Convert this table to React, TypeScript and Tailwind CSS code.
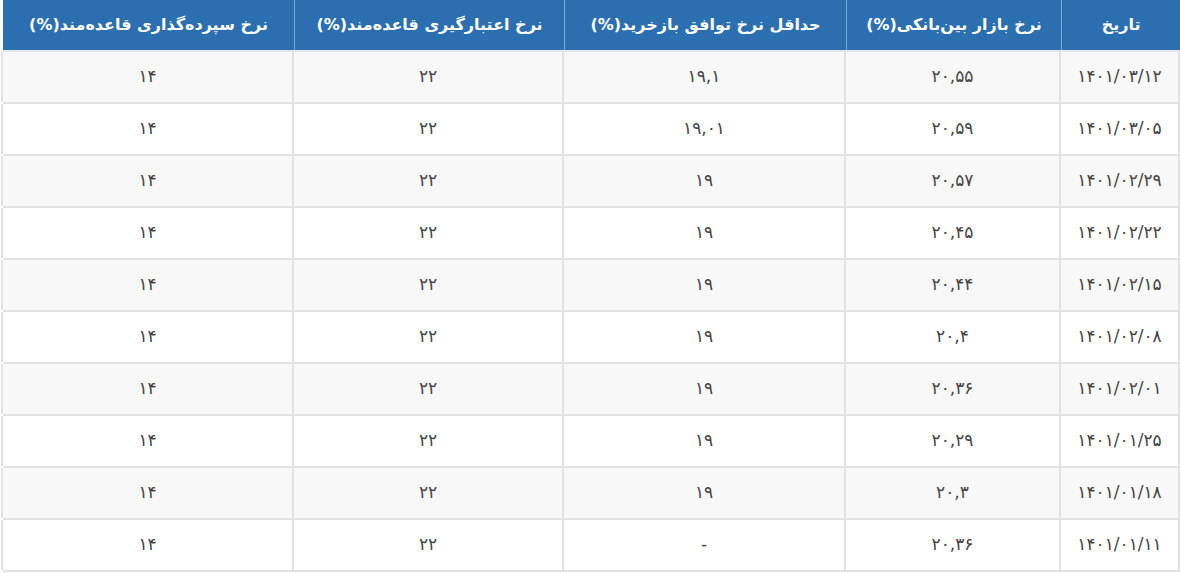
import * as React from "react";

const headers = [
  "تاریخ",
  "نرخ بازار بین‌بانکی(%)",
  "حداقل نرخ توافق بازخرید(%)",
  "نرخ اعتبارگیری قاعده‌مند(%)",
  "نرخ سپرده‌گذاری قاعده‌مند(%)",
];

const rows: string[][] = [
  ["۱۴۰۱/۰۳/۱۲", "۲۰,۵۵", "۱۹,۱", "۲۲", "۱۴"],
  ["۱۴۰۱/۰۳/۰۵", "۲۰,۵۹", "۱۹,۰۱", "۲۲", "۱۴"],
  ["۱۴۰۱/۰۲/۲۹", "۲۰,۵۷", "۱۹", "۲۲", "۱۴"],
  ["۱۴۰۱/۰۲/۲۲", "۲۰,۴۵", "۱۹", "۲۲", "۱۴"],
  ["۱۴۰۱/۰۲/۱۵", "۲۰,۴۴", "۱۹", "۲۲", "۱۴"],
  ["۱۴۰۱/۰۲/۰۸", "۲۰,۴", "۱۹", "۲۲", "۱۴"],
  ["۱۴۰۱/۰۲/۰۱", "۲۰,۳۶", "۱۹", "۲۲", "۱۴"],
  ["۱۴۰۱/۰۱/۲۵", "۲۰,۲۹", "۱۹", "۲۲", "۱۴"],
  ["۱۴۰۱/۰۱/۱۸", "۲۰,۳", "۱۹", "۲۲", "۱۴"],
  ["۱۴۰۱/۰۱/۱۱", "۲۰,۳۶", "-", "۲۲", "۱۴"],
];

const cols = "grid grid-cols-[119px_215px_282px_270px_291px]";

export default function App() {
  return (
    <div
      dir="rtl"
      className="w-[1180px] h-[573px] bg-white pl-[1px]"
      style={{ fontFamily: '"DejaVu Sans", sans-serif' }}
    >
      <div className="w-[1177px]">
        {/* header */}
        <div className={`${cols} h-[52px] border-b-2 border-[#e4e8ec]`}>
          {headers.map((h, i) => (
            <div
              key={i}
              className={`flex items-center justify-center bg-[#2c6fb1] text-white font-bold text-[16px] ${
                i < headers.length - 1 ? "border-l border-[#79aee0]" : ""
              }`}
            >
              {h}
            </div>
          ))}
        </div>

        {/* body */}
        {rows.map((r, ri) => (
          <div
            key={ri}
            className={`${cols} h-[52px] border-b-2 border-r-2 border-[#e2e2e2] ${
              ri % 2 === 0 ? "bg-[#f8f8f8]" : "bg-white"
            }`}
          >
            {r.map((c, ci) => (
              <div
                key={ci}
                className="flex items-center justify-center border-l-2 border-[#e2e2e2] text-[17px] text-[#444]"
              >
                {c}
              </div>
            ))}
          </div>
        ))}
      </div>
    </div>
  );
}
